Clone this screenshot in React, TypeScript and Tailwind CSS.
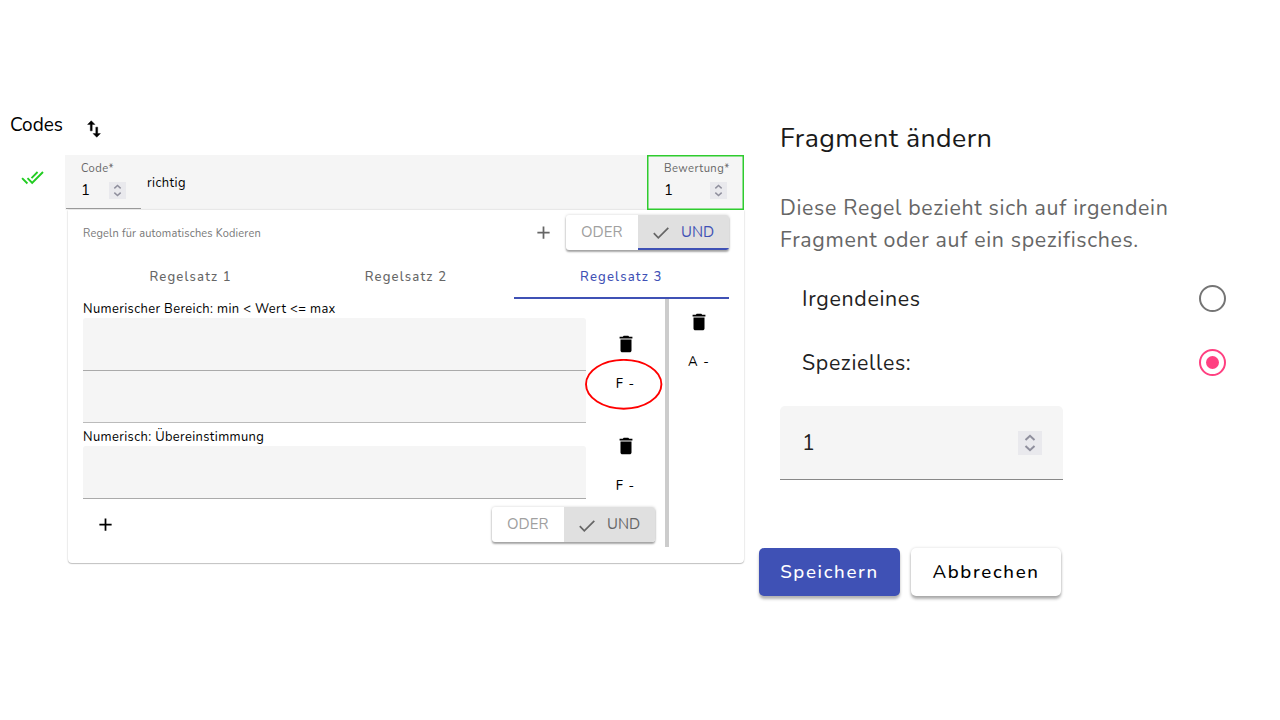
import { MdDoneAll, MdAdd, MdDelete } from "react-icons/md";

function SwapIcon() {
  return (
    <svg viewBox="0 0 24 24" className="mt-[8px] ml-[20px] size-[22px]" fill="currentColor" stroke="currentColor" strokeWidth="0.5">
      <path d="M16 17.01V10h-2v7.01h-3L15 21l4-3.99h-3zM9 3 5 6.99h3V14h2V6.99h3L9 3z" />
    </svg>
  );
}

function Spinner({ large = false }: { large?: boolean }) {
  return (
    <span className={`flex shrink-0 items-center justify-center bg-[#e9e9ed] text-[#8f8f9d] ${large ? "size-6" : "size-[17px]"}`}>
      <svg viewBox="0 0 24 24" className="size-full" fill="none" stroke="currentColor" strokeWidth="2">
        <path d="M7.5 9 12 4.8 16.5 9M7.5 15 12 19.2 16.5 15" />
      </svg>
    </span>
  );
}

function Check() {
  return (
    <svg viewBox="0 0 16 12" className="mt-[2px] mr-[12px] h-3 w-4" fill="none" stroke="#666" strokeWidth="1.7">
      <path d="M.8 6.2 5.3 10.8 15.3.8" />
    </svg>
  );
}

function Toggle({ active = false }: { active?: boolean }) {
  return (
    <div className="flex h-[35px] w-[163.5px] overflow-hidden rounded-[3px] bg-white text-[15px] shadow-[0_2px_2px_rgba(0,0,0,0.32),0_0_3px_rgba(0,0,0,0.18)]">
      <div className={`flex w-[72.5px] items-center justify-center text-[#a0a0a0] ${active ? "pb-px" : ""}`}>ODER</div>
      <div className={`flex w-[91px] items-center bg-[#e0e0e0] pl-[15px] ${active ? "border-b-2 border-[#3f51b5] pt-px text-[#3f51b5]" : "text-[#666]"}`}>
        <Check />
        UND
      </div>
    </div>
  );
}

function RuleActions({ circled = false }: { circled?: boolean }) {
  return (
    <div className="flex w-[79px] flex-col items-center">
      <MdDelete className="size-[22px] text-black" />
      <div className="relative mt-[20px] flex h-5 items-center text-[13.1px] font-medium tracking-[1.17px]">
        <span className="whitespace-nowrap">F -</span>
        {circled && (
          <svg className="absolute -top-[16px] left-1/2 -ml-[40px] h-[52px] w-[78px]" viewBox="0 0 78 52" fill="none">
            <ellipse cx="38.7" cy="25.3" rx="37.7" ry="24.4" stroke="#ff0000" strokeWidth="1.9" />
          </svg>
        )}
      </div>
    </div>
  );
}

export default function App() {
  return (
    <div className="flex h-[720px] w-[1280px] overflow-hidden bg-white font-['Nunito','Lato',sans-serif] text-black">
      <section className="w-[750px] shrink-0 pt-[110px] font-[450]">
        <header className="flex h-[45px] items-start pl-[10px]">
          <h2 className="text-[19px] leading-[30px]">Codes</h2>
          <SwapIcon />
        </header>
        <div className="flex">
          <div className="flex w-[65px] justify-center pt-[11px]">
            <MdDoneAll className="size-[23px] text-[#22cc22]" />
          </div>
          <div className="w-[680px]">
            <div className="flex h-[55px] w-[679px] bg-[#f5f5f5]">
              <div className="ml-px h-[54px] w-[75px] border-b border-[#999] pt-[7px] pl-[15px]">
                <div className="flex h-[14px] items-center text-[11.2px] tracking-[0.45px] text-[#666]">Code*</div>
                <div className="mt-[6px] flex h-[17px] items-center justify-between pr-[15px] text-[15px]">1<Spinner /></div>
              </div>
              <div className="flex flex-1 items-center pt-[2px] pl-[6px] text-[12.9px] tracking-[0.4px]">richtig</div>
              <div className="h-[55px] w-[97px] pt-[7px] pl-[17px] shadow-[inset_0_0_0_1.5px_#2ecc2e]">
                <div className="flex h-[14px] items-center text-[11.2px] tracking-[0.45px] text-[#666]">Bewertung*</div>
                <div className="mt-[6px] flex h-[17px] items-center justify-between pr-[17px] text-[15px]">1<Spinner /></div>
              </div>
            </div>
            <div className="ml-[3px] h-[353px] w-[676px] rounded-b-[4px] pr-[15px] pl-[15px] shadow-[0_1px_1px_rgba(0,0,0,0.2),0_0_2px_rgba(0,0,0,0.2)]">
              <div className="flex h-[45px] items-center">
                <span className="pt-[3px] text-[11px] tracking-[0.17px] text-[#777]">Regeln für automatisches Kodieren</span>
                <MdAdd className="mr-[12px] ml-auto size-[21px] text-[#666]" />
                <Toggle active />
              </div>
              <div className="flex h-[44px] text-[13.1px] font-medium tracking-[1.17px] text-[#666]">
                <div className="flex flex-1 items-center justify-center pt-px">Regelsatz 1</div>
                <div className="flex flex-1 items-center justify-center pt-px">Regelsatz 2</div>
                <div className="flex flex-1 items-center justify-center border-b-2 border-[#3f51b5] pt-[3px] text-[#3f51b5]">Regelsatz 3</div>
              </div>
              <div className="flex h-[248px]">
                <div className="w-[582px]">
                  <div className="flex h-[128px]">
                    <div className="w-[503px]">
                      <div className="flex h-[19px] items-center pt-[2px] text-[12.9px] tracking-[0.38px]">Numerischer Bereich: min &lt; Wert &lt;= max</div>
                      <div className="h-[53px] rounded-t-[3px] border-b border-[#aaa] bg-[#f5f5f5]" />
                      <div className="h-[52px] border-b border-[#bbb] bg-[#f5f5f5]" />
                    </div>
                    <div className="pt-[34px]"><RuleActions circled /></div>
                  </div>
                  <div className="flex h-[81px]">
                    <div className="w-[503px]">
                      <div className="flex h-[19px] items-center pt-[2px] text-[12.9px] tracking-[0.38px]">Numerisch: Übereinstimmung</div>
                      <div className="h-[53px] rounded-t-[3px] border-b border-[#aaa] bg-[#f5f5f5]" />
                    </div>
                    <div className="pt-2"><RuleActions /></div>
                  </div>
                  <div className="flex h-[33px] items-center justify-between pr-[10px] pl-3">
                    <MdAdd className="size-[21px]" />
                    <Toggle />
                  </div>
                </div>
                <div className="w-[4px] bg-[#ccc]" />
                <div className="flex w-[60px] flex-col items-center pt-3">
                  <MdDelete className="size-[22px]" />
                  <div className="mt-[20px] flex h-5 items-center text-[13.1px] font-medium tracking-[1.17px]">A -</div>
                </div>
              </div>
            </div>
          </div>
        </div>
      </section>
      <section className="w-[530px] pt-[118px] text-[21.33px] tracking-[0.667px]">
        <div className="pl-[30px]">
          <h1 className="flex h-10 items-center text-[26.67px] tracking-[0.45px] text-[#1a1a1a]">Fragment ändern</h1>
          <p className="mt-[34px] leading-8 text-[#666]">
            Diese Regel bezieht sich auf irgendein
            <br />
            Fragment oder auf ein spezifisches.
          </p>
          <div className="mt-[10px] flex h-16 w-[446px] items-center justify-between pl-[22px] text-[#222]">
            <span className="pt-[3px]">Irgendeines</span>
            <span className="size-[27px] rounded-full border-2 border-[#757575]" />
          </div>
          <div className="flex h-16 w-[446px] items-center justify-between pl-[22px] text-[#222]">
            <span className="pt-[3px]">Spezielles:</span>
            <span className="flex size-[27px] items-center justify-center rounded-full border-2 border-[#ff4081]"><span className="size-[13px] rounded-full bg-[#ff4081]" /></span>
          </div>
          <div className="mt-3 flex h-[74px] w-[283px] items-center justify-between rounded-t-[5px] border-b border-[#888] bg-[#f5f5f5] pr-[21px] pl-[22px] text-[#222]"><span className="pt-[2px]">1</span><Spinner large /></div>
        </div>
        <div className="mt-[68px] flex gap-[11px] pl-[9px] text-[18.67px] font-medium tracking-[1.67px]">
          <button className="flex h-12 w-[141px] items-center justify-center rounded-[5px] bg-[#3f51b5] text-white shadow-[0_3px_3px_rgba(0,0,0,0.3)]">Speichern</button>
          <button className="flex h-12 w-[150px] items-center justify-center rounded-[5px] bg-white shadow-[0_3px_3px_rgba(0,0,0,0.3),0_0_3px_rgba(0,0,0,0.15)]">Abbrechen</button>
        </div>
      </section>
    </div>
  );
}
